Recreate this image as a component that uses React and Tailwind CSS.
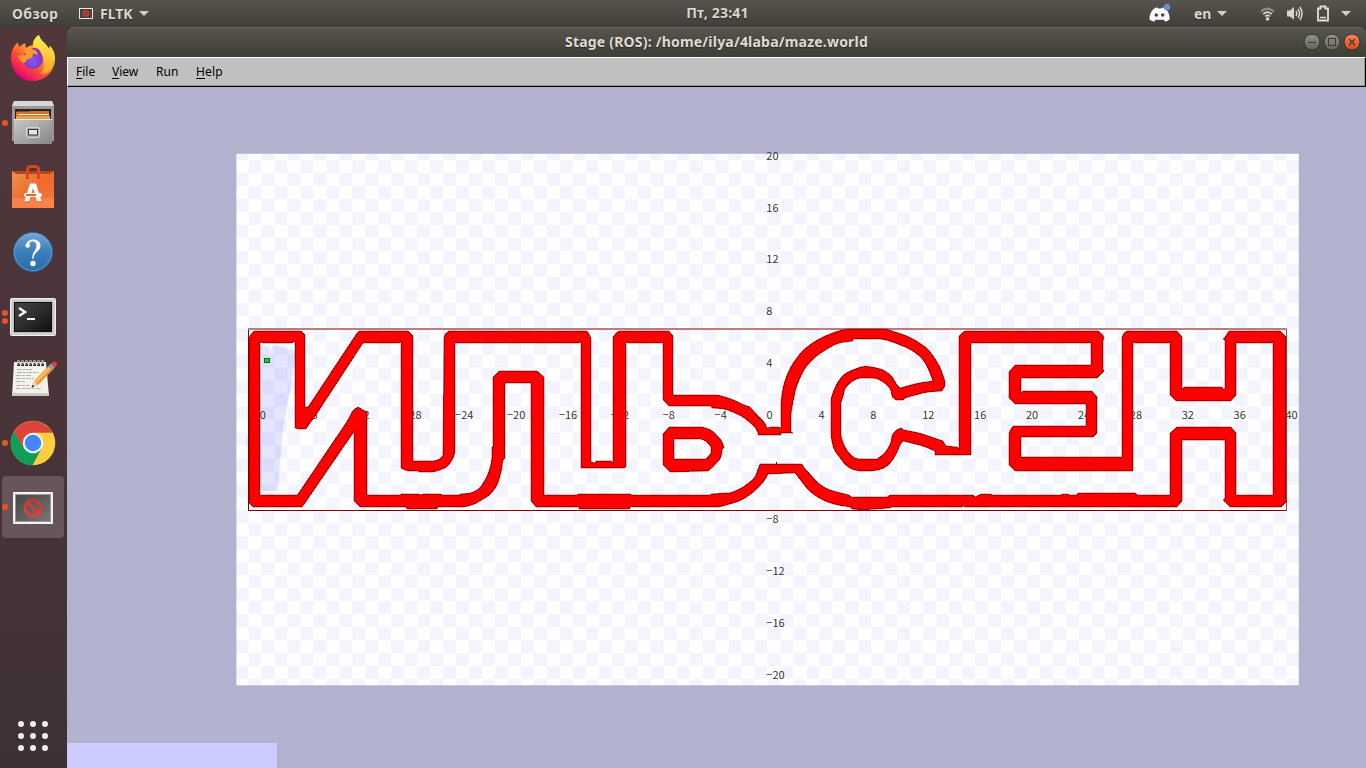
import React from 'react';

/* ---------- Stage map ---------- */

const UNIT = 12.975;
const OX = 767.5;
const OY = 419.5;

// Cuts shallow corners so that arcs read as curves while real corners stay sharp.
const smooth = (pts) => {
  const n = pts.length;
  return pts.flatMap((p, i) => {
    const a = pts[(i + n - 1) % n];
    const b = pts[(i + 1) % n];
    const u = [p[0] - a[0], p[1] - a[1]];
    const v = [b[0] - p[0], b[1] - p[1]];
    const lu = Math.hypot(...u);
    const lv = Math.hypot(...v);
    const turn = Math.acos(Math.min(1, (u[0] * v[0] + u[1] * v[1]) / (lu * lv || 1)));
    if (turn < 0.06 || turn > 0.62 || Math.min(lu, lv) < 4) return [p];
    const cut = Math.min(lu, lv) * 0.25;
    return [
      [p[0] - (u[0] / lu) * cut, p[1] - (u[1] / lu) * cut],
      [p[0] + (v[0] / lv) * cut, p[1] + (v[1] / lv) * cut],
    ];
  });
};

// Wall contours are stored as strips: [x origin, points], at a third of a pixel.
const toPath = (strips) => {
  const pts = strips.flatMap(([dx, s]) =>
    s.split(' ').map((p) => {
      const [x, y] = p.split(',').map(Number);
      return [Math.round((x + dx) / 3), Math.round((y + 930) / 3)];
    }),
  );
  return 'M' + smooth(pts).map(([x, y]) => `${x.toFixed(2)},${y.toFixed(2)}`).join('L') + 'Z';
};

const A = 690;
const B = 1440;
const C = 2190;
const D = 2940;

const outer = toPath([
  [A, '56,84 62,72 72,62 212,62 226,76 226,292 235,290 380,68 388,62 534,62 548,78 548,452 612,452 630,446 640,434 641,84 646,72 658,62'],
  [B, '320,62 334,80 334,455 345,458 347,453 393,453 400,458 400,80 408,70 416,62 566,62 580,78 580,254 714,254 735,262 762,270 785,282 800,288'],
  [C, '60,290 85,318 105,340 110,353 122,350 143,350 152,353 152,268 162,220 177,180 195,150 220,120 255,94 290,75 325,64 350,58 470,58 485,64 525,75 560,92 595,118 612,140 630,172 640,195 646,212 645,228 635,242 590,247 545,258 524,264 520,271 498,271 485,262 482,240 470,225 450,210 432,205 385,205 360,218 345,235 338,260 334,275 334,380 342,405 355,425 370,440 385,448 440,448 465,430 482,400 486,375 498,360 512,353 522,360 570,370 640,392 648,408 682,410 688,418 688,78 696,70 706,62'],
  [D, '355,62 368,76 373,84 368,92 368,178 373,182 350,205 122,205 122,250 130,244 335,244 350,262 350,370 338,382 122,382 122,442 425,442 425,80 432,70 442,62 590,62 607,80 607,238 612,232 727,232 730,238 736,236 736,90 730,86 736,80 748,62 900,62 917,80 917,575 902,590 750,590 736,575 730,571 736,565 736,391 607,391 607,574 590,590'],
  [C, '705,590 700,587 695,590 510,590 485,592 480,595 435,597 400,599 365,597 360,592 320,585 290,576 260,560 235,540 215,515 195,490 115,491 105,510 85,535 60,555 30,572 0,582'],
  [B, '720,590 450,590 450,596 298,596 296,590 168,590 152,573 152,218 75,218 74,445 68,450 64,490 50,528 30,555 0,574'],
  [A, '735,582 705,590 625,590 622,596 530,596 528,590 390,590 373,573 373,365 362,378 225,580 215,590 68,590 56,578'],
]);

const inner = toPath([
  [A, '89,95 99,100 187,100 189,95 196,97 196,353 205,358 228,358 240,340 258,315 400,98 410,98 506,100 512,95 512,475 530,482 565,482 567,485 613,485 640,478 655,468 668,448 674,425 674,100 682,98'],
  [B, '298,100 302,95 302,475 430,475 437,470 437,95 443,100 545,100 549,95 549,270 568,287 693,287 695,293 735,298 765,310 790,320 804,332'],
  [C, '75,350 84,370 84,376 152,376 152,370 190,370 184,365 184,310 190,275 197,235 210,205 225,175 255,142 290,118 325,100 368,94 370,88 460,88 495,98 540,118 575,145 595,175 610,212 565,218 510,235 500,225 485,198 462,180 430,170 400,167 360,182 340,195 320,220 306,255 302,270 302,385 313,420 330,445 350,470 380,483 435,484 470,470 495,440 510,405 520,392 580,408 614,424 615,436 722,436 722,98 730,100'],
  [D, '330,100 334,95 334,166 104,166 88,185 88,265 105,283 319,283 319,349 100,349 88,365 88,465 105,482 458,482 458,95 464,100 566,100 571,95 571,256 587,272 752,272 769,255 769,100 876,100 880,95 880,556 769,556 769,370 752,352 592,352 571,370 571,556 474,556 465,548 293,548 288,554 270,556 262,551 245,551 243,556 36,556 34,551 4,551'],
  [C, '752,551 735,560 730,556 480,556 472,562 362,562 358,556 320,547 290,537 265,520 245,498 225,478 217,463 90,463 75,500 60,515 30,538 0,548'],
  [B, '735,550 693,552 690,556 452,556 452,551 293,551 290,556 191,556 191,202 172,184 58,184 40,202 40,410 35,412 35,450 25,495 0,535'],
  [A, '725,550 690,552 688,556 635,556 633,551 582,551 570,556 568,551 512,551 510,556 410,556 410,305 385,292 370,300 355,330 205,551 200,556 89,556'],
]);

const ring =
  toPath([[B, '549,372 568,352 672,352 700,364 725,392 731,412 725,420 722,445 700,470 685,484 570,485 549,465']]) +
  toPath([[B, '581,387 665,387 680,395 693,412 693,430 678,447 581,447']]);

const walls = outer + inner + ring;

const xTicks = Array.from({ length: 21 }, (_, i) => i * 4 - 40);
const yTicks = [20, 16, 12, 8, 4, -8, -12, -16, -20];
const label = (n) => (n < 0 ? `−${-n}` : `${n}`);

function StageMap() {
  return (
    <svg className="block" width="1299" height="681" viewBox="67 87 1299 681">
      <defs>
        <pattern id="tiles" patternUnits="userSpaceOnUse" x={OX} y={OY} width={UNIT * 2} height={UNIT * 2}>
          <rect width={UNIT * 2} height={UNIT * 2} fill="#f4f4ff" />
          <rect x={UNIT} width={UNIT} height={UNIT} fill="#fff" />
          <rect y={UNIT} width={UNIT} height={UNIT} fill="#fff" />
        </pattern>
        <clipPath id="wallClip">
          <path d={walls} clipRule="evenodd" shapeRendering="crispEdges" />
        </clipPath>
      </defs>
      <rect x="236.4" y="153.8" width="1062.4" height="531.5" fill="url(#tiles)" />
      <path d="M262 345 270 347 269 357 272.500 345 295 350V363L287 407 283 430 280 463 278 491H261ZM248.500 430 246 442 248.500 454Z" fill="#0000ff" fillOpacity="0.1" />
      <g fontFamily="'Noto Sans CJK JP', 'Noto Sans', sans-serif" fontSize="11" fill="#333">
        {xTicks.map((n) => (
          <text key={n} x={OX + n * UNIT - 1} y="418.6">{label(n)}</text>
        ))}
        {yTicks.map((n) => (
          <text key={n} x={OX - 1.2} y={Math.floor(OY - n * UNIT + 0.15) - 0.4}>{label(n)}</text>
        ))}
      </g>
      <g shapeRendering="crispEdges">
        <rect x="248" y="328" width="1039" height="2" fill="#800000" fillOpacity="0.5" />
        <path d="M248.500 330V510.500H1286" fill="none" stroke="#800000" />
        <path d="M1286.500 330V511" stroke="#b04040" />
        <path d={walls} fill="#ff0000" fillRule="evenodd" />
        <path d={walls} fill="none" stroke="#800000" strokeWidth="2" strokeOpacity="0.55" clipPath="url(#wallClip)" />
        <path d={walls} fill="none" stroke="#800000" strokeWidth="1" strokeOpacity="0.5" shapeRendering="auto" />
        <path d="M776.500 462V465" stroke="#800000" />
        <rect x="264.500" y="358.500" width="5" height="4" fill="#00d92b" stroke="#066b16" />
      </g>
    </svg>
  );
}

/* ---------- Dock icons ---------- */

const Firefox = () => (
  <svg width="48" height="48" viewBox="0 0 48 48">
    <defs>
      <linearGradient id="ffBody" x1=".85" y1=".1" x2=".25" y2=".95">
        <stop offset="0" stopColor="#fff44f" />
        <stop offset=".35" stopColor="#ffa52a" />
        <stop offset=".65" stopColor="#ff4f35" />
        <stop offset="1" stopColor="#e8007c" />
      </linearGradient>
      <radialGradient id="ffGlobe" cx=".5" cy=".6" r=".6">
        <stop offset="0" stopColor="#7a5cf0" />
        <stop offset="1" stopColor="#8a2bbd" />
      </radialGradient>
      <linearGradient id="ffTail" x1="0" y1="0" x2="0" y2="1">
        <stop offset="0" stopColor="#fff251" />
        <stop offset="1" stopColor="#ffae25" />
      </linearGradient>
    </defs>
    <path d="M2 24C2 17 5 11 9 8.500L10 13C12 12 13 10 16 9L17 14C21 11 24 11 25 11C23 7 27 3 30 1C31 6 35 8 38 12L40 15 41 12C45 16 46.500 21 46 26C45 38 36 47 24 47C12 47 2 38 2 24Z" fill="url(#ffBody)" />
    <path d="M24 12C23 7 27 3 30 1C31 6 35 8 38 12L40 15 41 12C45 17 47 25 43 33C40 40 34 41 31 39C37 35 37 23 29 16Z" fill="url(#ffTail)" opacity=".85" />
    <circle cx="24" cy="25" r="10" fill="url(#ffGlobe)" />
    <path d="M15 15C21 12 28 14 31 18C27 17 27 19 30 22C26 19 22 19 24 22C23 25 18 24 17 27C15 31 11 27 9 22C12 21 15 21 17 21Z" fill="#ff9a26" />
    <path d="M22 15C27 12 32 16 32 20C29 17 27 18 26 16Z" fill="#8d2bd0" />
  </svg>
);

const Files = () => (
  <svg width="48" height="48" viewBox="0 0 48 48">
    <defs>
      <linearGradient id="fl" x1="0" y1="0" x2="1" y2="1">
        <stop offset="0" stopColor="#c9c9c9" />
        <stop offset="1" stopColor="#858585" />
      </linearGradient>
    </defs>
    <path d="M5 2H43L45 7V42H3V7Z" fill="#999" />
    <path d="M5 2H43L45 7H3Z" fill="#d8d8d8" />
    <path d="M6 10H42V20H6Z" fill="#262320" />
    <path d="M8 12H38V19H8Z" fill="#a63e15" />
    <path d="M7 13H20L22 12H40V20H7Z" fill="#dc6c20" />
    <path d="M7 17H41V21H7Z" fill="#e6a04a" />
    <path d="M9 15.500H40" stroke="#fff0dc" />
    <path d="M5 20H43V45H5Z" fill="url(#fl)" />
    <path d="M5 20.500H43" stroke="#e6e6e6" />
    <rect x="17.500" y="28.500" width="13" height="10" rx="1.500" fill="#aaa" stroke="#d6d6d6" />
    <rect x="19.500" y="30.500" width="9" height="5.500" fill="#e4e4e4" stroke="#333" />
  </svg>
);

const Software = () => (
  <svg width="48" height="48" viewBox="0 0 48 48">
    <defs>
      <linearGradient id="sw" x1="0" y1="0" x2="1" y2="1">
        <stop offset="0" stopColor="#e99450" />
        <stop offset=".5" stopColor="#ef6b2e" />
        <stop offset="1" stopColor="#f07840" />
      </linearGradient>
    </defs>
    <path d="M3 7H45V12H3Z" fill="#b7441b" />
    <path d="M3 7 7 10H41L45 7V44H3Z" fill="url(#sw)" />
    <path d="M3 34H45V44H3Z" fill="#ff8d58" opacity=".6" />
    <path d="M18.500 15V6Q18.500 2.500 22 2.500H26Q29.500 2.500 29.500 6V15" fill="none" stroke="#d9481d" strokeWidth="3" />
    <path d="M15.500 37 21 19.500H27L32.500 37H28L24 24 20 37Z" fill="#fff" />
    <rect x="15" y="29" width="18" height="4" rx="2" fill="#fff" />
    <path d="M17 31H27" stroke="#ee6228" strokeWidth="2" />
  </svg>
);

const HelpIcon = () => (
  <svg width="48" height="48" viewBox="0 0 48 48">
    <defs>
      <linearGradient id="hp" x1="0" y1="0" x2="0" y2="1">
        <stop offset="0" stopColor="#73a5d8" />
        <stop offset=".5" stopColor="#3b7fbb" />
        <stop offset="1" stopColor="#2a6ba6" />
      </linearGradient>
    </defs>
    <circle cx="24" cy="25" r="19.500" fill="url(#hp)" stroke="#31659a" />
    <circle cx="24" cy="25" r="18.500" fill="none" stroke="#87b1dd" strokeOpacity=".5" />
    <path d="M17 19C17 10 31.500 10.500 31.500 18.500C31.500 24.500 24.500 25 24.500 32H23.300C23 24.500 27.500 24 27.500 18.500C27.500 13 20.500 13 20 17Z" fill="#fff" />
    <circle cx="18.700" cy="18.500" r="2.300" fill="#fff" />
    <circle cx="24" cy="36.500" r="2.700" fill="#fff" />
  </svg>
);

const Terminal = () => (
  <svg width="48" height="48" viewBox="0 0 48 48">
    <defs>
      <linearGradient id="tm" x1="0" y1="0" x2="1" y2="1">
        <stop offset="0" stopColor="#454545" />
        <stop offset=".5" stopColor="#2d2d2d" />
        <stop offset="1" stopColor="#0f0f0f" />
      </linearGradient>
    </defs>
    <rect x="1.500" y="5.500" width="45" height="37" rx="1" fill="#d0d0d0" stroke="#efefef" />
    <rect x="4.500" y="8.500" width="39" height="31" fill="#aaa" />
    <rect x="5.500" y="9.500" width="37" height="29" fill="url(#tm)" stroke="#111" />
    <path d="M10 15 16 19 10 23" fill="none" stroke="#f4f4f4" strokeWidth="2.600" />
    <path d="M18 26H26" stroke="#f4f4f4" strokeWidth="2" />
  </svg>
);

const Notes = () => (
  <svg width="48" height="48" viewBox="0 0 48 48">
    <path d="M5 7H37L40 41H3Z" fill="#f3f3ec" />
    <path d="M4 38H39.500V41H3Z" fill="#c9cbbe" />
    <g stroke="#b6b6b0" strokeWidth="1" strokeDasharray="5 1 3 1">
      <path d="M8 14.500H24" /><path d="M8 17.500H30" /><path d="M7 20.500H22" /><path d="M7 23.500H25" /><path d="M7 26.500H17" /><path d="M7 30.500H20" /><path d="M7 33.500H32" />
    </g>
    {[8, 12, 16, 20, 24, 28, 32].map((x) => (
      <g key={x}>
        <rect x={x} y="8" width="3" height="3" fill="#333" />
        <path d={`M${x + 0.5} 10V7Q${x + 0.5} 5.500 ${x + 1.5} 5.500T${x + 2.5} 7V9`} fill="none" stroke="#b5b5b5" strokeWidth="1.200" />
      </g>
    ))}
    <path d="M22.500 32.500 25 26 39.500 11 43.500 15 29 30Z" fill="#f0952f" />
    <path d="M25 27 40 12 41.500 13.500 27 28.500Z" fill="#ffc168" />
    <path d="M22.500 32.500 25 26 29 30Z" fill="#ecd2a2" />
    <path d="M22.500 32.500 23.500 30 25.500 31.500Z" fill="#111" />
    <path d="M39 11.500 42 8.500 46 12.500 43 15.500Z" fill="#9b9b9b" />
    <path d="M42 8.500 44 7Q48 6 48 10L46 12.500Z" fill="#e44040" />
  </svg>
);

const Chrome = () => (
  <svg width="48" height="48" viewBox="0 0 48 48">
    <circle cx="24" cy="24" r="22.300" fill="#ffcd40" />
    <path d="M24 24 14.500 29.500 5 12.500A22.300 22.300 0 0 1 43.500 13.800H24Z" fill="#db4437" />
    <path d="M5 12.500 15 29.500 24 34 32.500 29.500 23.500 46.300A22.300 22.300 0 0 1 5 12.500Z" fill="#0f9d58" />
    <circle cx="24" cy="24" r="10.300" fill="#f4f4f4" />
    <circle cx="24" cy="24" r="8.200" fill="#4285f4" />
  </svg>
);

const Missing = () => (
  <svg className="translate-y-px" width="48" height="48" viewBox="0 0 48 48">
    <defs>
      <linearGradient id="ms" x1="0" y1="0" x2="1" y2="1">
        <stop offset="0" stopColor="#464646" />
        <stop offset="1" stopColor="#777" />
      </linearGradient>
      <linearGradient id="no" x1="0" y1="0" x2="0" y2="1">
        <stop offset="0" stopColor="#c43835" />
        <stop offset="1" stopColor="#df403a" />
      </linearGradient>
    </defs>
    <rect x="4" y="8" width="40" height="32" fill="#f3f3f3" />
    <rect x="6.500" y="10.500" width="35" height="27" fill="url(#ms)" stroke="#999" />
    <circle cx="24" cy="24" r="8" fill="none" stroke="url(#no)" strokeWidth="3.200" />
    <path d="M18.500 18.500 29.500 29.500" stroke="#d23c38" strokeWidth="3" />
  </svg>
);

const dock = [
  { Icon: Firefox, dots: 0, h: 'h-[62px]' },
  { Icon: Files, dots: 1, h: 'h-[68px]' },
  { Icon: Software, dots: 0, h: 'h-[62px]' },
  { Icon: HelpIcon, dots: 0, h: 'h-[64px]' },
  { Icon: Terminal, dots: 2, h: 'h-[68px]' },
  { Icon: Notes, dots: 0, h: 'h-[56px]' },
  { Icon: Chrome, dots: 1, h: 'h-[72px]' },
];

const Dots = ({ n }) => (
  <div className="flex w-[6px] shrink-0 flex-col gap-[2px]">
    {Array.from({ length: n }, (_, i) => (
      <span key={i} className="h-[6px] w-[6px] rounded-full bg-[#ea5420]" />
    ))}
  </div>
);

function Dock() {
  return (
    <aside className="flex w-[67px] shrink-0 flex-col bg-linear-to-b from-[#51373a] via-[#49343a] to-[#3e3133]">
      {dock.map(({ Icon, dots, h }, i) => (
        <div key={i} className={`flex items-center pl-[2px] ${h}`}>
          <Dots n={dots} />
          <div className="ml-px"><Icon /></div>
        </div>
      ))}
      <div className="mt-[-3px] ml-[2px] flex h-[62px] w-[62px] items-center rounded bg-[#675559]">
        <Dots n={1} />
        <div className="ml-px"><Missing /></div>
      </div>
      <div className="mt-auto mb-[17px] ml-[18px] grid w-[30px] grid-cols-3 gap-[6px]">
        {Array.from({ length: 9 }, (_, i) => (
          <span key={i} className="h-[6px] w-[6px] rounded-full bg-[#efeeed]" />
        ))}
      </div>
    </aside>
  );
}

/* ---------- Top panel ---------- */

const Caret = () => (
  <svg width="10" height="5" viewBox="0 0 10 5"><path d="M0 0H10L5 5Z" fill="#d3d0c9" /></svg>
);

function TopBar() {
  return (
    <header className="flex h-[27px] shrink-0 items-center bg-linear-to-b from-[#56544c] to-[#403f3a] text-[14px] font-bold text-[#d9d6cd] [text-shadow:0_1px_1px_#2b2a27]">
      <div className="flex w-[217px] items-center pl-[12px]">
        <span className="w-[67px] pb-px tracking-[0.4px] whitespace-nowrap">Обзор</span>
        <svg width="14" height="11" viewBox="0 0 14 11">
          <rect x=".5" y=".5" width="13" height="10" fill="#46403f" stroke="#e9e9e9" />
          <circle cx="7" cy="5.500" r="2.600" fill="none" stroke="#d53b3a" strokeWidth="1.400" />
          <path d="M5 3.500 9 7.500" stroke="#d53b3a" strokeWidth="1.200" />
        </svg>
        <span className="ml-[7px] w-[39px] pb-px">FLTK</span>
        <Caret />
      </div>
      <div className="flex-1 pb-[2px] pl-[69px] text-center tracking-[0.2px] whitespace-nowrap">
        Пт, 23:41
      </div>
      <div className="flex w-[217px] items-center">
        <svg width="22" height="19" viewBox="0 0 22 19">
          <path d="M4.500 5Q7 3.600 8.500 3.600L9 4.500H12.500L13 3.600Q15 3.800 17 5Q21 10 20.500 15.500Q18.500 17.300 16 17.500L15 15.800H6.500L5.500 17.500Q3 17.300 0.500 15.500Q0 10 4.500 5Z" fill="#fff" />
          <circle cx="7.300" cy="11" r="1.800" fill="#484640" />
          <circle cx="13.700" cy="11" r="1.800" fill="#484640" />
          <circle cx="18" cy="3.300" r="3.200" fill="#7289da" />
        </svg>
        <span className="ml-[23px] w-[23px] pb-px">en</span>
        <Caret />
        <svg className="ml-[33px]" width="15" height="14" viewBox="0 0 15 14" fill="none">
          <path d="M1 4.800Q7.500-1.500 14 4.800" stroke="#8e8c85" strokeWidth="2" />
          <path d="M3.200 7.200Q7.500 3 11.800 7.200M5.200 9.400Q7.500 7.300 9.800 9.400" stroke="#d8d6d0" strokeWidth="1.600" />
          <circle cx="7.500" cy="12" r="1.800" fill="#d8d6d0" />
        </svg>
        <svg className="ml-[12px]" width="17" height="15" viewBox="0 0 17 15" fill="none" stroke="#d8d6d0">
          <path d="M0 4.500H3L7 .8V13.800L3 10.500H0Z" fill="#d8d6d0" stroke="none" />
          <path d="M9 5Q10.500 7.500 9 10M11 3Q14 7.500 11 12M13 1Q17 7.500 13 14" strokeWidth="1.500" />
        </svg>
        <svg className="ml-[12px]" width="14" height="17" viewBox="0 0 14 17" fill="none">
          <path d="M2 3.500H4.500V1.500H9.500V3.500H12V15.500H2Z" stroke="#e0ded8" strokeWidth="1.800" />
          <path d="M4 12.500H10" stroke="#e0ded8" strokeWidth="1.500" />
        </svg>
        <div className="ml-[11px] flex"><Caret /></div>
      </div>
    </header>
  );
}

/* ---------- Window ---------- */

function WindowButtons() {
  return (
    <svg className="mb-px" width="58" height="18" viewBox="0 0 58 18" fill="none">
      <defs>
        <linearGradient id="wb" x1="0" y1="0" x2="0" y2="1"><stop stopColor="#92908a" /><stop offset="1" stopColor="#65635d" /></linearGradient>
        <linearGradient id="wc" x1="0" y1="0" x2="0" y2="1"><stop stopColor="#f5865f" /><stop offset="1" stopColor="#dd4814" /></linearGradient>
      </defs>
      <circle cx="9" cy="9" r="8" fill="url(#wb)" stroke="#33322e" />
      <circle cx="29" cy="9" r="8" fill="url(#wb)" stroke="#33322e" />
      <circle cx="49" cy="9" r="8" fill="url(#wc)" stroke="#33322e" />
      <path d="M5 9.500H13" stroke="#3b3a35" />
      <rect x="25.500" y="5.500" width="7" height="7" stroke="#3b3a35" />
      <path d="M46 6 52 12M52 6 46 12" stroke="#3b3a35" strokeWidth="1.300" />
    </svg>
  );
}

function AppWindow() {
  return (
    <main className="flex min-w-0 flex-1 flex-col bg-[#3c2f31]">
      <div className="flex h-[30px] shrink-0 items-center rounded-t-[6px] border-t border-[#66645c] bg-linear-to-b from-[#56544c] to-[#3e3d38] text-[#dfdbd2]">
        <div className="w-[58px]" />
        <div className="flex-1 pb-[3px] pl-[5px] text-center text-[14px] tracking-[0.2px] font-bold whitespace-nowrap [text-shadow:0_1px_1px_#2b2a27]">
          Stage (ROS): /home/ilya/4laba/maze.world
        </div>
        <WindowButtons />
        <div className="w-[5px]" />
      </div>
      <nav className="flex h-[30px] shrink-0 items-center gap-[16px] border-t border-l border-r border-b border-t-white border-r-black border-b-black border-l-white bg-[#c0c0c0] pl-[8px] text-[12px] text-black shadow-[inset_-1px_-1px_0_#999]">
        <span className="w-[20px]"><u className="underline-offset-2">F</u>ile</span>
        <span className="w-[28px]"><u className="underline-offset-2">V</u>iew</span>
        <span className="w-[24px]">Run</span>
        <span className="tracking-[0.15px]"><u className="underline-offset-2">H</u>elp</span>
      </nav>
      <div className="relative h-[681px] bg-[#b2b2ce]">
        <StageMap />
        <div className="absolute bottom-0 left-0 h-[25px] w-[210px] bg-[#ccccff]" />
      </div>
    </main>
  );
}

export default function App() {
  return (
    <div className="flex h-[768px] w-[1366px] flex-col overflow-hidden font-['Noto_Sans','Open_Sans',sans-serif]">
      <TopBar />
      <div className="flex min-h-0 flex-1">
        <Dock />
        <AppWindow />
      </div>
    </div>
  );
}
